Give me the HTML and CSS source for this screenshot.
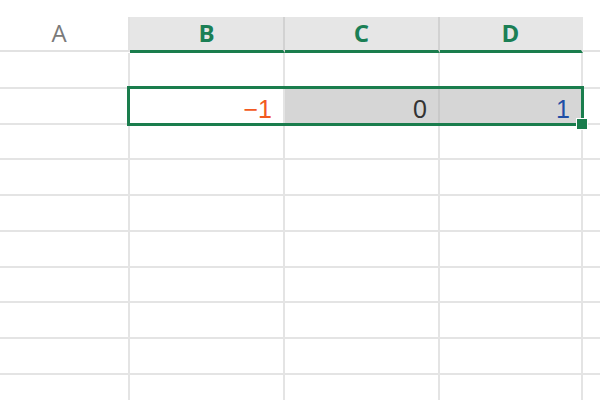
FILE: index.html
```html
<!DOCTYPE html>
<html lang="en">
<head>
  <meta charset="UTF-8">
  <title>Sheet</title>
  <link rel="stylesheet" href="styles.css">
</head>
<body>
  <div class="sheet">
    <div class="grid">
      <!-- column headers -->
      <div class="head head-plain">A</div>
      <div class="head head-sel">B</div>
      <div class="head head-sel">C</div>
      <div class="head head-sel head-last">D</div>
      <div class="head head-plain head-rest"></div>

      <!-- row 1 -->
      <div class="cell"></div><div class="cell"></div><div class="cell"></div><div class="cell"></div><div class="cell cell-rest"></div>

      <!-- row 2 -->
      <div class="cell"></div>
      <div class="cell num neg">−1</div>
      <div class="cell num shade">0</div>
      <div class="cell num shade pos">1</div>
      <div class="cell cell-rest"></div>

      <!-- empty rows -->
      <div class="cell"></div><div class="cell"></div><div class="cell"></div><div class="cell"></div><div class="cell cell-rest"></div>
      <div class="cell"></div><div class="cell"></div><div class="cell"></div><div class="cell"></div><div class="cell cell-rest"></div>
      <div class="cell"></div><div class="cell"></div><div class="cell"></div><div class="cell"></div><div class="cell cell-rest"></div>
      <div class="cell"></div><div class="cell"></div><div class="cell"></div><div class="cell"></div><div class="cell cell-rest"></div>
      <div class="cell"></div><div class="cell"></div><div class="cell"></div><div class="cell"></div><div class="cell cell-rest"></div>
      <div class="cell"></div><div class="cell"></div><div class="cell"></div><div class="cell"></div><div class="cell cell-rest"></div>
      <div class="cell"></div><div class="cell"></div><div class="cell"></div><div class="cell"></div><div class="cell cell-rest"></div>
      <div class="cell"></div><div class="cell"></div><div class="cell"></div><div class="cell"></div><div class="cell cell-rest"></div>
    </div>

    <!-- selection outline over B2:D2 -->
    <div class="selection"><span class="handle"></span></div>
  </div>
</body>
</html>
```

FILE: styles.css
```css
html, body { margin: 0; padding: 0; background: #fff; overflow: hidden; }
body { width: 600px; height: 400px; }

.sheet { position: relative; padding-top: 17px; }

.grid {
  display: grid;
  grid-template-columns: 130px 155px 155px 143px 1fr;
  grid-template-rows: 36px;
  grid-auto-rows: 35.75px;
}

.head {
  box-sizing: border-box;
  display: flex;
  align-items: center;
  justify-content: center;
  font-family: "Open Sans", "Liberation Sans", sans-serif;
  font-size: 24px;
  line-height: 24px;
  padding-bottom: 1px;
}
.head-plain {
  color: #7a7a7a;
  border-bottom: 2px solid #e2e2e2;
  border-right: 2px solid #e2e2e2;
  padding-right: 10px;
  margin-bottom: 1px;
}
.head-rest { border-right: none; }
.head-sel {
  background: #e6e6e6;
  color: #1b7f55;
  font-weight: 700;
  border-bottom: 3px solid #1a7d4d;
  border-right: 2px solid #d2d2d2;
}
.head-last { border-right-color: #e6e6e6; }

.cell {
  box-sizing: border-box;
  border-right: 2px solid #e4e4e4;
  border-bottom: 2px solid #e4e4e4;
}
.cell-rest { border-right: none; }

.num {
  display: flex;
  align-items: flex-end;
  justify-content: flex-end;
  padding: 0 11px 1px 0;
  font-family: "Liberation Sans", Arial, sans-serif;
  font-size: 25px;
  line-height: 25px;
  color: #333;
}
.neg { color: #f25a22; }
.pos { color: #1f4ea6; }
.shade { background: #d6d6d6; border-right-color: #c9c9c9; }

.selection {
  position: absolute;
  left: 127px;
  top: 86px;
  width: 457px;
  height: 40px;
  box-sizing: border-box;
  border: 3px solid #1a7d4d;
  pointer-events: none;
}
.handle {
  position: absolute;
  right: -7px;
  bottom: -7px;
  width: 10px;
  height: 10px;
  background: #1a7d4d;
  border: 1px solid #fff;
}
```
